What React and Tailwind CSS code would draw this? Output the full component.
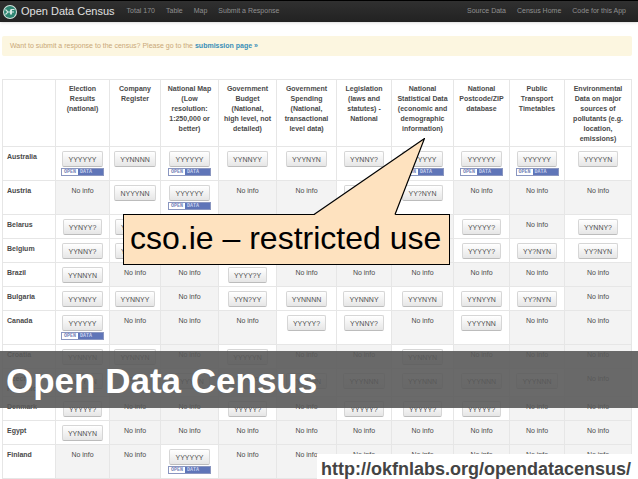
import React from "react";

const columns = [
  { title: "Election Results (national)", width: "w-[54px]" },
  { title: "Company Register", width: "w-[51px]" },
  { title: "National Map (Low resolution: 1:250,000 or better)", width: "w-[58px]" },
  { title: "Government Budget (National,\nhigh level, not detailed)", width: "w-[58px]" },
  { title: "Government Spending (National, transactional level data)", width: "w-[60px]" },
  { title: "Legislation (laws and statutes) - National", width: "w-[55px]" },
  { title: "National Statistical Data (economic and demographic information)", width: "w-[62px]" },
  { title: "National Postcode/ZIP database", width: "w-[56px]" },
  { title: "Public Transport Timetables", width: "w-[55px]" },
  { title: "Environmental Data on major sources of pollutants (e.g. location, emissions)", width: "w-[67px]" },
];

// "" means there is no information for that dataset
const rows = [
  { name: "Australia", height: "h-[34px]", cells: ["YYYYYY", "YYNNNN", "YYYYYY", "YYNNYY", "YYYNYN", "YYNNY?", "YYYYYY", "YYYYYY", "YYYYYY", "YYYYYN"] },
  { name: "Austria", height: "h-[34px]", cells: ["", "NYYYNN", "YYYYYY", "", "", "YYNNY?", "YY?NYN", "", "", ""] },
  { name: "Belarus", height: "h-6", cells: ["YYNYY?", "YYNNY?", "", "", "", "", "", "YYYYY?", "", "YYNNY?"] },
  { name: "Belgium", height: "h-6", cells: ["YYNNY?", "YYNNY?", "", "", "", "", "", "YYYYY?", "YY?NYN", "YY?NYN"] },
  { name: "Brazil", height: "h-6", cells: ["YYNNYN", "", "", "YYYY?Y", "", "", "", "", "", ""] },
  { name: "Bulgaria", height: "h-6", cells: ["YYYNYY", "YYNNYY", "", "YYN?YY", "YYNNNN", "YYNNNY", "YYYNYN", "YYNYYN", "YY?NYN", ""] },
  { name: "Canada", height: "h-[34px]", cells: ["YYYYYY", "", "", "", "YYYYY?", "YYNNY?", "", "YYYYNN", "", ""] },
  { name: "Croatia", height: "h-6", cells: ["YYNNYN", "YYNNYN", "", "YYYYYN", "", "", "YYNNYN", "", "", ""] },
  { name: "Czech Republic", height: "h-7", cells: ["YYYYYN", "", "YYYYYN", "", "YYYNNN", "YYYNNN", "YYYNNN", "YYYNNN", "YYYNNN", ""] },
  { name: "Denmark", height: "h-6", cells: ["YYYYY?", "", "", "YYYYY?", "", "YYYYY?", "YYYYY?", "YYYYY?", "", ""] },
  { name: "Egypt", height: "h-6", cells: ["YYNNYN", "", "", "", "", "", "", "", "", ""] },
  { name: "Finland", height: "h-[34px]", cells: ["", "", "YYYYYY", "", "", "", "", "", "", ""] },
];

const Logo = () => (
  <svg viewBox="0 0 28 28" className="w-[14px] h-[14px] flex-shrink-0">
    <circle cx="14" cy="14" r="14" fill="#d5e6e0" />
    <circle cx="14" cy="14" r="12" fill="#2f8572" />
    <path
      d="M5 9l5 5-5 5M10 14h5M15 9v10M23 9h-6v10M17 14h5"
      fill="none"
      stroke="#d5e6e0"
      strokeWidth="2.2"
    />
  </svg>
);

const Navbar = () => (
  <header className="flex items-center h-[22px] pl-[3px] pr-3 border-t border-black bg-linear-to-b from-[#303030] to-[#222222] shadow-sm text-[7px] text-[#909090]">
    <Logo />
    <a href="#home" className="ml-1 text-[11px] leading-none text-[#e0e0e0] whitespace-nowrap">
      Open Data Census
    </a>
    <nav className="flex gap-[11px] ml-3 whitespace-nowrap">
      <a href="#total">Total 170</a>
      <a href="#table">Table</a>
      <a href="#map">Map</a>
      <a href="#submit">Submit a Response</a>
    </nav>
    <nav className="flex gap-[11px] ml-auto whitespace-nowrap">
      <a href="#source">Source Data</a>
      <a href="#census">Census Home</a>
      <a href="#code">Code for this App</a>
    </nav>
  </header>
);

const OpenDataBadge = () => (
  <span className="flex w-[43px] h-2 mt-px mx-auto border border-[#8a96c0] bg-white font-['Liberation_Mono'] font-bold text-[5px] leading-[6px] text-left">
    <span className="w-4 pl-0.5 text-[#7484b8]">OPEN</span>
    <span className="flex-1 pl-0.5 bg-[#5f75b8] text-[#c8d1ec]">DATA</span>
  </span>
);

const Score = ({ value }) => {
  if (!value) {
    return (
      <td className="border border-[#e6e6e6] bg-[#f3f3f3] pt-[5px] leading-[10px] align-top">No info</td>
    );
  }
  return (
    <td className="border border-[#e6e6e6] pt-1 align-top">
      <button
        type="button"
        className="block mx-auto h-4 px-[5px] rounded-xs border border-[#d6d6d6] border-b-[#bcbcbc] bg-linear-to-b from-white to-[#e6e6e6] leading-none text-[#505050]"
      >
        {value}
      </button>
      {value === "YYYYYY" && <OpenDataBadge />}
    </td>
  );
};

const CensusTable = () => (
  <table className="table-fixed w-full border-collapse text-center text-[7px] text-[#4a4a4a]">
    <thead>
      <tr className="h-[67px] leading-[10px]">
        <th className="w-[53px] border border-[#e6e6e6]" />
        {columns.map((column) => (
          <th
            key={column.title}
            className={`${column.width} border border-[#e6e6e6] pt-1 px-1 align-top font-bold whitespace-pre-line`}
          >
            {column.title}
          </th>
        ))}
      </tr>
    </thead>
    <tbody>
      {rows.map((row) => (
        <tr key={row.name} className={row.height}>
          <th className="border border-[#e6e6e6] pt-[5px] px-1 align-top text-left font-bold leading-[10px]">
            {row.name}
          </th>
          {row.cells.map((value, i) => (
            <Score key={i} value={value} />
          ))}
        </tr>
      ))}
    </tbody>
  </table>
);

// Speech bubble that points at the statistics column
const Callout = () => (
  <div className="absolute left-[123px] top-[214px] w-[327px]">
    <p className="h-[51px] border border-black bg-[#fee2bf] pl-1.5 text-[32px] leading-[46px] text-black whitespace-nowrap">
      cso.ie – restricted use
    </p>
    <svg viewBox="0 0 112 78" className="absolute left-[190px] -top-[76px] w-28 h-[78px]">
      <path d="M1 77L111.500 0.500L82 77V78H1Z" fill="#fee2bf" />
      <path d="M1 76.500L111.500 0.500L82 76.500" fill="none" stroke="#000" strokeWidth="1.2" />
    </svg>
  </div>
);

export default function App() {
  return (
    <div className="relative h-screen overflow-hidden bg-white font-['Liberation_Sans',Arial,sans-serif]">
      <Navbar />
      <main className="pl-[2px] pr-[6px]">
        <p className="mt-[14px] mb-[23px] h-5 px-2 rounded-xs bg-[#fcf6e0] text-[7px] leading-5 text-[#c9a878]">
          Want to submit a response to the census? Please go to the{" "}
          <a href="#submission" className="font-bold text-[#3a8fb8]">
            submission page »
          </a>
        </p>
        <CensusTable />
      </main>

      <Callout />

      <h1 className="absolute inset-x-0 top-[351px] h-[57px] pl-1.5 bg-[#5a5a5a]/90 font-bold text-[35px] leading-[60px] text-white whitespace-nowrap">
        Open Data Census
      </h1>
      <a
        href="http://okfnlabs.org/opendatacensus/"
        className="absolute right-0 bottom-0 h-[25px] pl-1 pr-[7px] bg-white font-bold text-[18px] leading-[30px] text-[#444444]"
      >
        http://okfnlabs.org/opendatacensus/
      </a>
    </div>
  );
}
